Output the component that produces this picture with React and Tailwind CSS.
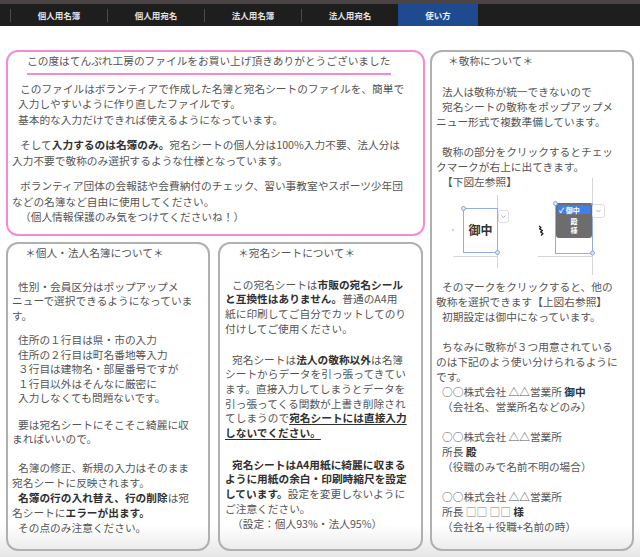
import React from 'react'

const font = '"Noto Sans CJK JP", "Noto Sans", sans-serif'

const L = ({ i = '', children }) => (
    <div className={`whitespace-nowrap ${i}`}>{children}</div>
)

const B = ({ children }) => <span className="font-bold text-[#303030]">{children}</span>

const navItems = ['個人用名簿', '個人用宛名', '法人用名簿', '法人用宛名']

function Figure() {
    return (
        <svg width="200" height="90" viewBox="0 0 200 90" className="-ml-[4px] block overflow-visible">
            {/* grid lines */}
            <line x1="65.5" y1="6" x2="65.5" y2="79" stroke="#d6d6d6" />
            <line x1="21" y1="67.5" x2="66" y2="67.5" stroke="#d6d6d6" />
            <line x1="160.5" y1="-11" x2="160.5" y2="86" stroke="#d6d6d6" />
            <line x1="106" y1="67.5" x2="161" y2="67.5" stroke="#d6d6d6" />
            <circle cx="21" cy="41" r="0.8" fill="#999" />

            {/* left cell */}
            <rect x="31.5" y="19.5" width="34" height="44" fill="#fff" stroke="#8eb0e3" />
            <text x="48.5" y="45.5" textAnchor="middle" fontSize="12" fontWeight="700" fill="#333" fontFamily={font}>御中</text>
            <circle cx="31.5" cy="19.5" r="2" fill="#dde6f5" stroke="#7a9ad0" strokeWidth="0.8" />
            <circle cx="65.5" cy="63.5" r="2" fill="#dde6f5" stroke="#7a9ad0" strokeWidth="0.8" />
            <rect x="66.5" y="21.5" width="10" height="12" rx="2" fill="#fff" stroke="#dcdcdc" />
            <path d="M69.5 26.5 l2 2 l2 -2" stroke="#9a9a9a" fill="none" strokeWidth="0.8" />

            {/* cursor */}
            <path d="M107 37 l2 1.5 l-1.5 1.5 l3 1.5 l-2 1.5 l2.5 1.5 l-2 2" stroke="#111" fill="none" strokeWidth="1.1" strokeLinejoin="round" />

            {/* right cell with menu */}
            <rect x="123.5" y="14.5" width="37" height="50" fill="#fff" stroke="#8eb0e3" />
            <rect x="124" y="14" width="36" height="35" rx="3" fill="#6d6d6d" />
            <rect x="125.5" y="16" width="33" height="9" rx="1.5" fill="#3f80ee" />
            <text x="127" y="23.5" fontSize="7" fontWeight="700" fill="#fff" fontFamily={font}>✓ 御中</text>
            <text x="142" y="34.5" textAnchor="middle" fontSize="7" fontWeight="700" fill="#fff" fontFamily={font}>殿</text>
            <text x="142" y="43.5" textAnchor="middle" fontSize="7" fontWeight="700" fill="#fff" fontFamily={font}>様</text>
            <circle cx="123.5" cy="14.5" r="2" fill="#dde6f5" stroke="#7a9ad0" strokeWidth="0.8" />
            <circle cx="160.5" cy="64" r="2" fill="#dde6f5" stroke="#7a9ad0" strokeWidth="0.8" />
            <rect x="160.5" y="15.5" width="12" height="13" rx="2" fill="#fff" stroke="#dcdcdc" />
            <path d="M164.5 21 l2 2 l2 -2" stroke="#9a9a9a" fill="none" strokeWidth="0.8" />
        </svg>
    )
}

export default function App() {
    return (
        <div className="w-[640px] h-[557px] overflow-hidden bg-white text-[#555555]" style={{ fontFamily: font }}>
            {/* Header */}
            <div className="h-[4px] bg-[#4b4444]" />
            <div className="h-[22px] bg-[#1e1e1e] flex pl-[10px]">
                {navItems.map(item => (
                    <div key={item} className="w-[97px] flex items-center">
                        <div className="w-px h-[13px] bg-[#4a4a4a]" />
                        <div className="flex-1 text-center text-[8.5px] font-bold text-[#e2e2e2]">{item}</div>
                    </div>
                ))}
                <div className="w-[80px] h-full bg-[#1f4a8f] flex items-center justify-center text-[8.5px] font-bold text-[#eef2fa]">
                    使い方
                </div>
            </div>

            {/* Content */}
            <div className="h-[531px] pt-[24px] pl-[6px] flex gap-[5px] text-[10.7px] bg-[linear-gradient(to_bottom,#ffffff_0%,#ffffff_94%,#e6e6e6_100%)]">
                <div className="w-[419px]">
                    {/* Intro */}
                    <div className="h-[186px] rounded-[12px] border-2 border-[#f58bd4] pl-[4px] pt-[1px] leading-[15.5px]">
                        <div className="pl-[15px]">
                            <span className="inline-block border-b-2 border-[#f58bd4] pb-[4px] pr-[1px]">
                                この度はてんぷれ工房のファイルをお買い上げ頂きありがとうございました
                            </span>
                        </div>
                        <div className="mt-[6px]">
                            <L i="pl-[8px]">このファイルはボランティアで作成した名簿と宛名シートのファイルを、簡単で</L>
                            <L i="pl-[6px]">入力しやすいように作り直したファイルです。</L>
                            <L i="pl-[6px]">基本的な入力だけできれば使えるようになっています。</L>
                        </div>
                        <div className="mt-[10px]">
                            <L i="pl-[8px]">そして<B>入力するのは名簿のみ。</B>宛名シートの個人分は100%入力不要、法人分は</L>
                            <L>入力不要で敬称のみ選択するような仕様となっています。</L>
                        </div>
                        <div className="mt-[10px]">
                            <L i="pl-[8px]">ボランティア団体の会報誌や会費納付のチェック、習い事教室やスポーツ少年団</L>
                            <L>などの名簿など自由に使用してください。</L>
                            <L i="pl-[8px]">（個人情報保護のみ気をつけてくださいね！）</L>
                        </div>
                    </div>

                    <div className="mt-[6px] flex gap-[8px]">
                        {/* 個人・法人名簿 */}
                        <div className="w-[204px] h-[309px] rounded-[12px] border-2 border-[#b0b0b0] pl-[4px] pt-[2px] leading-[14.5px]">
                            <L i="pl-[13px]">＊個人・法人名簿について＊</L>
                            <div className="mt-[19px]">
                                <L i="pl-[6px]">性別・会員区分はポップアップメ</L>
                                <L>ニューで選択できるようになっていま</L>
                                <L>す。</L>
                            </div>
                            <div className="mt-[10px]">
                                <L i="pl-[6px]">住所の１行目は県・市の入力</L>
                                <L i="pl-[6px]">住所の２行目は町名番地等入力</L>
                                <L i="pl-[6px]">３行目は建物名・部屋番号ですが</L>
                                <L i="pl-[6px]">１行目以外はそんなに厳密に</L>
                                <L i="pl-[6px]">入力しなくても問題ないです。</L>
                            </div>
                            <div className="mt-[12px]">
                                <L i="pl-[6px]">要は宛名シートにそこそこ綺麗に収</L>
                                <L>まればいいので。</L>
                            </div>
                            <div className="mt-[13px] leading-[15px]">
                                <L i="pl-[6px]">名簿の修正、新規の入力はそのまま</L>
                                <L>宛名シートに反映されます。</L>
                                <L i="pl-[6px]"><B>名簿の行の入れ替え、行の削除</B>は宛</L>
                                <L>名シートに<B>エラーが出ます。</B></L>
                                <L i="pl-[6px]">その点のみ注意ください。</L>
                            </div>
                        </div>

                        {/* 宛名シート */}
                        <div className="w-[205px] h-[309px] rounded-[12px] border-2 border-[#b0b0b0] pl-[5px] pt-[2px] leading-[14.7px]">
                            <L i="pl-[13px]">＊宛名シートについて＊</L>
                            <div className="mt-[17px]">
                                <L i="pl-[7px]">この宛名シートは<B>市販の宛名シール</B></L>
                                <L><B>と互換性はありません。</B>普通のA4用</L>
                                <L>紙に印刷してご自分でカットしてのり</L>
                                <L>付けしてご使用ください。</L>
                            </div>
                            <div className="mt-[16px]">
                                <L i="pl-[7px]">宛名シートは<B>法人の敬称以外</B>は名簿</L>
                                <L>シートからデータを引っ張ってきてい</L>
                                <L>ます。直接入力してしまうとデータを</L>
                                <L>引っ張ってくる関数が上書き削除され</L>
                                <L>てしまうので<span className="font-bold text-[#303030] underline underline-offset-[2px]">宛名シートには直接入力</span></L>
                                <L><span className="font-bold text-[#303030] underline underline-offset-[2px]">しないでください。</span></L>
                            </div>
                            <div className="mt-[17px]">
                                <L i="pl-[7px]"><B>宛名シートはA4用紙に綺麗に収まる</B></L>
                                <L><B>ように用紙の余白・印刷時縮尺を設定</B></L>
                                <L><B>しています。</B>設定を変更しないように</L>
                                <L>ご注意ください。</L>
                                <L i="pl-[7px]">（設定：個人93%・法人95%）</L>
                            </div>
                        </div>
                    </div>
                </div>

                {/* 敬称 */}
                <div className="w-[204px] h-[501px] rounded-[12px] border-2 border-[#b0b0b0] pl-[4px] pt-[1px] leading-[15px]">
                    <L i="pl-[12px]">＊敬称について＊</L>
                    <div className="mt-[16px]">
                        <L i="pl-[6px]">法人は敬称が統一できないので</L>
                        <L i="pl-[6px]">宛名シートの敬称をポップアップメ</L>
                        <L>ニュー形式で複数準備しています。</L>
                    </div>
                    <div className="mt-[15px]">
                        <L i="pl-[6px]">敬称の部分をクリックするとチェッ</L>
                        <L>クマークが右上に出てきます。</L>
                        <L i="pl-[6px]">【下図左参照】</L>
                    </div>
                    <Figure />
                    <div>
                        <L i="pl-[6px]">そのマークをクリックすると、他の</L>
                        <L>敬称を選択できます【上図右参照】</L>
                        <L i="pl-[6px]">初期設定は御中になっています。</L>
                    </div>
                    <div className="mt-[15px]">
                        <L i="pl-[6px]">ちなみに敬称が３つ用意されている</L>
                        <L>のは下記のよう使い分けられるように</L>
                        <L>です。</L>
                        <L i="pl-[6px]">○○株式会社 △△営業所 <B>御中</B></L>
                        <L i="pl-[6px]">（会社名、営業所名などのみ）</L>
                    </div>
                    <div className="mt-[15px]">
                        <L i="pl-[6px]">○○株式会社 △△営業所</L>
                        <L i="pl-[6px]">所長 <B>殿</B></L>
                        <L i="pl-[6px]">（役職のみで名前不明の場合）</L>
                    </div>
                    <div className="mt-[15px]">
                        <L i="pl-[6px]">○○株式会社 △△営業所</L>
                        <L i="pl-[6px]">所長 <span className="text-[#777777]">□□ □□</span> <B>様</B></L>
                        <L i="pl-[6px]">（会社名＋役職+名前の時）</L>
                    </div>
                </div>
            </div>
        </div>
    )
}
